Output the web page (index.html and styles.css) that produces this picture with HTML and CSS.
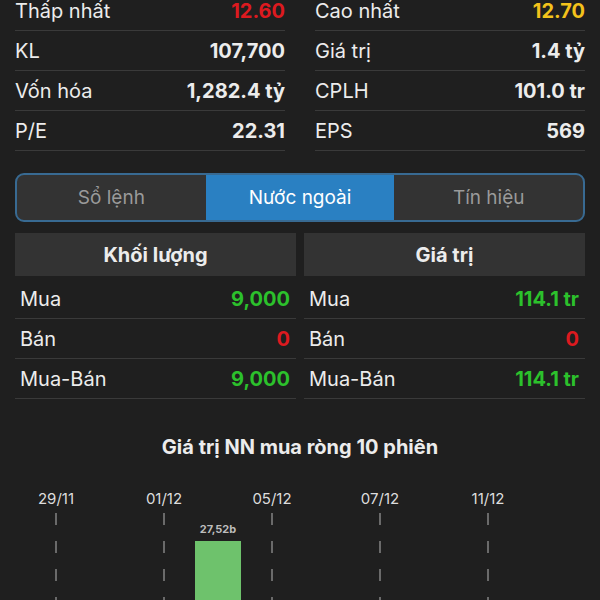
FILE: index.html
```html
<!DOCTYPE html>
<html lang="vi">
  <head>
    <meta charset="UTF-8" />
    <meta name="viewport" content="width=device-width, initial-scale=1.0" />
    <title>Nước ngoài</title>
    <link rel="stylesheet" href="styles.css">
  </head>
  <body>
    <div class="stats">
      <div class="stat"><span>Thấp nhất</span><b class="red">12.60</b></div>
      <div class="stat"><span>Cao nhất</span><b class="yellow">12.70</b></div>
      <div class="stat"><span>KL</span><b>107,700</b></div>
      <div class="stat"><span>Giá trị</span><b>1.4 tỷ</b></div>
      <div class="stat"><span>Vốn hóa</span><b>1,282.4 tỷ</b></div>
      <div class="stat"><span>CPLH</span><b>101.0 tr</b></div>
      <div class="stat"><span>P/E</span><b>22.31</b></div>
      <div class="stat"><span>EPS</span><b>569</b></div>
    </div>

    <div class="tabs">
      <div class="tab">Sổ lệnh</div>
      <div class="tab active">Nước ngoài</div>
      <div class="tab">Tín hiệu</div>
    </div>

    <div class="foreign">
      <div class="col">
        <div class="col-head">Khối lượng</div>
        <div class="row"><span>Mua</span><b class="green">9,000</b></div>
        <div class="row"><span>Bán</span><b class="red">0</b></div>
        <div class="row"><span>Mua-Bán</span><b class="green">9,000</b></div>
      </div>
      <div class="col">
        <div class="col-head">Giá trị</div>
        <div class="row"><span>Mua</span><b class="green">114.1 tr</b></div>
        <div class="row"><span>Bán</span><b class="red">0</b></div>
        <div class="row"><span>Mua-Bán</span><b class="green">114.1 tr</b></div>
      </div>
    </div>

    <h2 class="chart-title">Giá trị NN mua ròng 10 phiên</h2>

    <div class="chart">
      <div class="slot"><div class="date">29/11</div><div class="plot"><div class="grid-line"></div></div></div>
      <div class="slot"><div class="date"></div><div class="plot"></div></div>
      <div class="slot"><div class="date">01/12</div><div class="plot"><div class="grid-line"></div></div></div>
      <div class="slot">
        <div class="date"></div>
        <div class="plot">
          <div class="bar-value">27,52b</div>
          <div class="bar"></div>
        </div>
      </div>
      <div class="slot"><div class="date">05/12</div><div class="plot"><div class="grid-line"></div></div></div>
      <div class="slot"><div class="date"></div><div class="plot"></div></div>
      <div class="slot"><div class="date">07/12</div><div class="plot"><div class="grid-line"></div></div></div>
      <div class="slot"><div class="date"></div><div class="plot"></div></div>
      <div class="slot"><div class="date">11/12</div><div class="plot"><div class="grid-line"></div></div></div>
      <div class="slot"><div class="date"></div><div class="plot"></div></div>
    </div>
  </body>
</html>
```

FILE: styles.css
```css
body {
  margin: 0;
  background-color: #1f1f1f;
  color: #ececec;
  font-family: Inter, "Noto Sans", sans-serif;
  overflow: hidden;
}

b {
  font-weight: 700;
}

.red {
  color: #dc1a1f;
}
.yellow {
  color: #f3c21b;
}
.green {
  color: #2cc12c;
}

/* top stats */
.stats {
  display: grid;
  grid-template-columns: 1fr 1fr;
  column-gap: 30px;
  padding: 0 15px;
  margin-top: -9px;
}
.stat {
  height: 39px;
  display: flex;
  justify-content: space-between;
  align-items: center;
  border-bottom: 1px solid #3a3a3a;
  font-size: 20px;
}

/* segmented tabs */
.tabs {
  display: flex;
  margin: 22px 15px 0;
  height: 45px;
  border: 2px solid #386a92;
  border-radius: 9px;
  overflow: hidden;
  background-color: #333333;
}
.tab {
  flex: 1;
  display: flex;
  align-items: center;
  justify-content: center;
  font-size: 19px;
  color: #9a9a9a;
}
.tab.active {
  background-color: #2a80c2;
  color: #ffffff;
}

/* foreign trading table */
.foreign {
  display: grid;
  grid-template-columns: 1fr 1fr;
  column-gap: 8px;
  margin: 11px 15px 0;
}
.col-head {
  height: 43px;
  display: flex;
  align-items: center;
  justify-content: center;
  background-color: #333333;
  font-size: 20px;
  font-weight: 700;
  margin-bottom: 3px;
}
.row {
  height: 39px;
  display: flex;
  justify-content: space-between;
  align-items: center;
  padding: 0 6px 0 5px;
  border-bottom: 1px solid #3a3a3a;
  font-size: 20px;
}

/* chart */
.chart-title {
  margin: 36px 0 0;
  text-align: center;
  font-size: 20px;
  font-weight: 700;
  line-height: 24px;
}
.chart {
  display: flex;
  padding: 0 29px;
  margin-top: 30px;
}
.slot {
  width: 54px;
  display: flex;
  flex-direction: column;
  align-items: center;
}
.date {
  height: 20px;
  line-height: 20px;
  font-size: 15px;
  color: #dddddd;
}
.plot {
  margin-top: 4px;
  height: 120px;
  display: flex;
  flex-direction: column;
  align-items: center;
}
.grid-line {
  width: 2px;
  height: 100%;
  background: repeating-linear-gradient(to bottom, #6a6a6a 0 12px, transparent 12px 28px);
}
.bar-value {
  margin-top: 10px;
  line-height: 13px;
  font-size: 11px;
  font-weight: 700;
  color: #bdbdbd;
}
.bar {
  margin-top: 5px;
  width: 46px;
  height: 80px;
  background-color: #6ec26c;
}
```
